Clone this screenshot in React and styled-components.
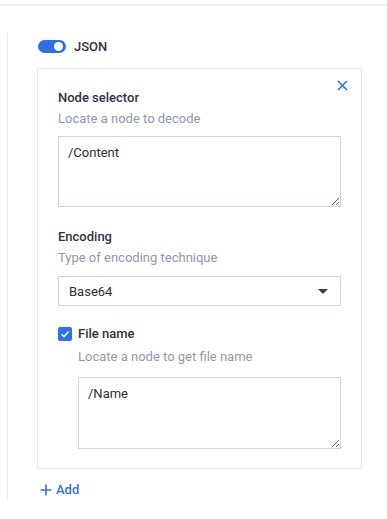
import React from "react";
import styled, { createGlobalStyle } from "styled-components";

const GlobalStyle = createGlobalStyle`
  body {
    margin: 0;
    background: #ffffff;
    font-family: Roboto, "Liberation Sans", sans-serif;
    color: #2d3445;
  }
`;

const App = () => {
  return (
    <>
      <GlobalStyle />
      <TopRule />
      <Section>
        <ToggleRow>
          <Toggle>
            <Knob />
          </Toggle>
          <ToggleLabel>JSON</ToggleLabel>
        </ToggleRow>
        <Card>
          <CloseButton aria-label="close">
            <svg width="11" height="11" viewBox="0 0 11 11">
              <path d="M1 1L10 10M10 1L1 10" stroke="#2f6fe8" strokeWidth="1.6" fill="none" />
            </svg>
          </CloseButton>
          <Field>
            <Label>Node selector</Label>
            <Hint>Locate a node to decode</Hint>
            <TextArea defaultValue="/Content" />
          </Field>
          <Field spaced>
            <Label>Encoding</Label>
            <Hint>Type of encoding technique</Hint>
            <Select>
              <span>Base64</span>
              <Caret />
            </Select>
          </Field>
          <CheckRow>
            <CheckBox>
              <svg width="10" height="10" viewBox="0 0 10 10">
                <path d="M1.5 5.2L4 7.6L8.6 2.6" stroke="#fff" strokeWidth="1.5" fill="none" />
              </svg>
            </CheckBox>
            <Label>File name</Label>
          </CheckRow>
          <Nested>
            <Hint>Locate a node to get file name</Hint>
            <TextArea defaultValue="/Name" nested />
          </Nested>
        </Card>
        <AddButton>
          <svg width="12" height="12" viewBox="0 0 12 12">
            <path d="M6 0.5V11.5M0.5 6H11.5" stroke="#2f6fe8" strokeWidth="1.6" fill="none" />
          </svg>
          Add
        </AddButton>
      </Section>
    </>
  );
};
export default App;

const TopRule = styled.div`
  height: 4px;
  border-bottom: 2px solid #eef0f4;
`;

const Section = styled.div`
  margin: 27px 0 0 7px;
  height: 467px;
  border-left: 1px solid #e8eaf0;
  padding: 7px 0 0 30px;
  box-sizing: border-box;
`;

const ToggleRow = styled.div`
  display: flex;
  align-items: center;
  gap: 8px;
  height: 13px;
`;

const Toggle = styled.div`
  width: 28px;
  height: 13px;
  border-radius: 7px;
  background: #2f6fe8;
  position: relative;
`;

const Knob = styled.div`
  position: absolute;
  right: 3px;
  top: 2px;
  width: 9px;
  height: 9px;
  border-radius: 50%;
  background: #ffffff;
`;

const ToggleLabel = styled.span`
  font-size: 13px;
  font-weight: 500;
  color: #2d3445;
`;

const Card = styled.div`
  position: relative;
  width: 325px;
  margin: 15px 0 0 -1px;
  border: 1px solid #e6e8ee;
  box-sizing: border-box;
  padding: 20px 20px 19px;
`;

const CloseButton = styled.div`
  position: absolute;
  top: 11px;
  right: 13px;
  display: flex;
`;

const Field = styled.div`
  display: flex;
  flex-direction: column;
  margin-top: ${(p) => (p.spaced ? "21px" : "0")};
`;

const Label = styled.div`
  font-size: 13px;
  font-weight: 500;
  line-height: 17px;
  color: #2d3445;
`;

const Hint = styled.div`
  font-size: 13px;
  line-height: 17px;
  margin-top: 4px;
  color: #8e9ab2;
`;

const TextArea = styled.textarea`
  margin-top: ${(p) => (p.nested ? "12px" : "9px")};
  width: 100%;
  height: ${(p) => (p.nested ? "72px" : "71px")};
  box-sizing: border-box;
  border: 1px solid #cfd5e3;
  border-radius: 0;
  padding: 8px 9px;
  font-family: Roboto, "Liberation Sans", sans-serif;
  font-size: 13px;
  color: #2a2f3a;
  resize: vertical;
  outline: none;
`;

const Select = styled.div`
  margin-top: 10px;
  height: 30px;
  border: 1px solid #cfd5e3;
  box-sizing: border-box;
  display: flex;
  align-items: center;
  justify-content: space-between;
  padding: 0 12px 0 10px;
  font-size: 13px;
  color: #2a2f3a;
`;

const Caret = styled.span`
  width: 0;
  height: 0;
  border-left: 5px solid transparent;
  border-right: 5px solid transparent;
  border-top: 5px solid #3a4154;
`;

const CheckRow = styled.div`
  display: flex;
  align-items: center;
  gap: 6px;
  margin-top: 19px;
`;

const CheckBox = styled.div`
  width: 14px;
  height: 14px;
  border-radius: 2px;
  background: #2f6fe8;
  display: flex;
  align-items: center;
  justify-content: center;
`;

const Nested = styled.div`
  padding-left: 20px;
  margin-top: 2px;
  display: flex;
  flex-direction: column;
`;

const AddButton = styled.div`
  display: flex;
  align-items: center;
  gap: 4px;
  margin-top: 13px;
  margin-left: 2px;
  font-size: 13px;
  font-weight: 500;
  color: #2f6fe8;
`;
